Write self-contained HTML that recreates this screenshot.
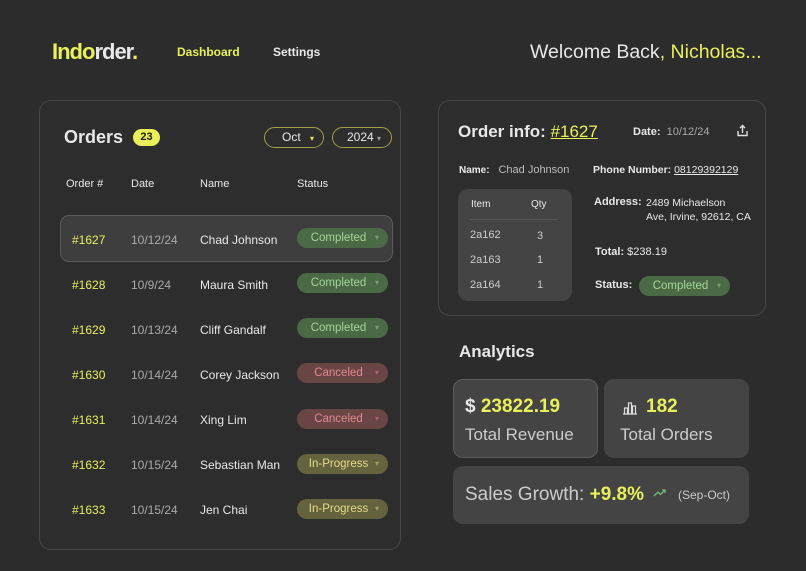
<!DOCTYPE html>
<html><head><meta charset="utf-8"><style>
*{box-sizing:border-box;margin:0;padding:0}
body{width:806px;height:571px;background:#2c2c2c;font-family:"Liberation Sans",sans-serif;color:#e8e8e8;position:relative;overflow:hidden}
.a{position:absolute;white-space:nowrap}
.y{color:#e9f05a}
.card{position:absolute;border:1px solid #464646;border-radius:12px;background:#2d2d2d}
.pill{position:absolute;width:91px;height:20px;border-radius:10px;font-size:11.5px;line-height:20px;text-align:center;padding-right:8px}
.pill:after{content:"▾";position:absolute;right:9px;font-size:8px;opacity:.5}
.g{background:#4a6a45;color:#a6d49a}
.r{background:#6a4546;color:#e08a90}
.p{background:#65623e;color:#e2dd8a}
.row{font-size:12px}
.box{position:absolute;background:#444;border-radius:10px}
</style></head><body>
<div class="a" style="left:52px;top:39px;font-size:22px;font-weight:bold;letter-spacing:-1px"><span class="y">Indo</span>rder<span class="y">.</span></div>
<div class="a y" style="left:177px;top:45px;font-size:12px;font-weight:bold">Dashboard</div>
<div class="a" style="left:273px;top:45px;font-size:12px;font-weight:bold">Settings</div>
<div class="a" style="left:530px;top:41px;font-size:19.5px">Welcome Back<span class="y">, Nicholas...</span></div>

<div class="card" style="left:39px;top:100px;width:362px;height:450px"></div>
<div class="a" style="left:64px;top:127px;font-size:18px;font-weight:bold">Orders</div>
<div class="a" style="left:133px;top:129px;width:27px;height:17px;border-radius:9px;background:#e9f05a;color:#222;font-size:11px;font-weight:bold;text-align:center;line-height:17px">23</div>
<div class="a" style="left:264px;top:127px;width:60px;height:21px;border:1px solid #a0a040;border-radius:11px;font-size:12px;line-height:19px;padding-left:17px">Oct <span class="y" style="font-size:8px;margin-left:6px">▾</span></div>
<div class="a" style="left:332px;top:127px;width:60px;height:21px;border:1px solid #a0a040;border-radius:11px;font-size:12px;line-height:19px;padding-left:14px">2024 <span style="font-size:8px;opacity:.6">▾</span></div>
<div class="a" style="left:66px;top:178px;font-size:11px">Order #</div>
<div class="a" style="left:131px;top:178px;font-size:11px">Date</div>
<div class="a" style="left:200px;top:178px;font-size:11px">Name</div>
<div class="a" style="left:297px;top:178px;font-size:11px">Status</div>
<div class="a" style="left:60px;top:215px;width:333px;height:47px;background:#3e3e3e;border:1px solid #5a5a5a;border-radius:9px"></div>

<div class="a row y" style="left:72px;top:233px">#1627</div><div class="a row" style="left:131px;top:233px;color:#aaa">10/12/24</div><div class="a row" style="left:200px;top:233px">Chad Johnson</div><div class="pill g" style="left:297px;top:228px">Completed</div>
<div class="a row y" style="left:72px;top:278px">#1628</div><div class="a row" style="left:131px;top:278px;color:#aaa">10/9/24</div><div class="a row" style="left:200px;top:278px">Maura Smith</div><div class="pill g" style="left:297px;top:273px">Completed</div>
<div class="a row y" style="left:72px;top:323px">#1629</div><div class="a row" style="left:131px;top:323px;color:#aaa">10/13/24</div><div class="a row" style="left:200px;top:323px">Cliff Gandalf</div><div class="pill g" style="left:297px;top:318px">Completed</div>
<div class="a row y" style="left:72px;top:368px">#1630</div><div class="a row" style="left:131px;top:368px;color:#aaa">10/14/24</div><div class="a row" style="left:200px;top:368px">Corey Jackson</div><div class="pill r" style="left:297px;top:363px">Canceled</div>
<div class="a row y" style="left:72px;top:413px">#1631</div><div class="a row" style="left:131px;top:413px;color:#aaa">10/14/24</div><div class="a row" style="left:200px;top:413px">Xing Lim</div><div class="pill r" style="left:297px;top:409px">Canceled</div>
<div class="a row y" style="left:72px;top:458px">#1632</div><div class="a row" style="left:131px;top:458px;color:#aaa">10/15/24</div><div class="a row" style="left:200px;top:458px">Sebastian Man</div><div class="pill p" style="left:297px;top:454px">In-Progress</div>
<div class="a row y" style="left:72px;top:503px">#1633</div><div class="a row" style="left:131px;top:503px;color:#aaa">10/15/24</div><div class="a row" style="left:200px;top:503px">Jen Chai</div><div class="pill p" style="left:297px;top:499px">In-Progress</div>

<div class="card" style="left:438px;top:100px;width:328px;height:216px"></div>
<div class="a" style="left:458px;top:122px;font-size:17px;font-weight:bold">Order info: <span class="y" style="font-weight:normal;text-decoration:underline">#1627</span></div>
<div class="a" style="left:633px;top:126px;font-size:11px;font-weight:bold">Date: <span style="font-weight:normal;color:#aaa">&nbsp;10/12/24</span></div>
<svg class="a" style="left:736px;top:124px" width="13" height="13" viewBox="0 0 13 13" fill="none" stroke="#ddd" stroke-width="1.4"><path d="M2 7v4.5h9V7M6.5 9V1.5M4 4l2.5-2.5L9 4"/></svg>
<div class="a" style="left:459px;top:164px;font-size:10px;font-weight:bold">Name: <span style="font-weight:normal;font-size:11px;color:#bbb">&nbsp;&nbsp;Chad Johnson</span></div>
<div class="a" style="left:593px;top:164px;font-size:10.5px;font-weight:bold">Phone Number: <span style="font-weight:normal;text-decoration:underline">08129392129</span></div>
<div class="box" style="left:458px;top:189px;width:114px;height:112px"></div>
<div class="a" style="left:471px;top:199px;font-size:10px">Item</div><div class="a" style="left:531px;top:199px;font-size:10px">Qty</div>
<div class="a" style="left:469px;top:219px;width:89px;height:1px;background:#555"></div>
<div class="a" style="left:470px;top:229px;font-size:11px;color:#ccc">2a162</div><div class="a" style="left:537px;top:230px;font-size:11px;color:#ccc">3</div>
<div class="a" style="left:470px;top:254px;font-size:11px;color:#ccc">2a163</div><div class="a" style="left:537px;top:254px;font-size:11px;color:#ccc">1</div>
<div class="a" style="left:470px;top:279px;font-size:11px;color:#ccc">2a164</div><div class="a" style="left:537px;top:279px;font-size:11px;color:#ccc">1</div>
<div class="a" style="left:594px;top:196px;font-size:11px;font-weight:bold">Address:</div>
<div class="a" style="left:646px;top:196px;font-size:10.5px;line-height:14px">2489 Michaelson<br>Ave, Irvine, 92612, CA</div>
<div class="a" style="left:595px;top:246px;font-size:11px"><b>Total:</b> $238.19</div>
<div class="a" style="left:595px;top:279px;font-size:11px;font-weight:bold">Status:</div>
<div class="pill g" style="left:639px;top:276px">Completed</div>

<div class="a" style="left:459px;top:342px;font-size:17px;font-weight:bold">Analytics</div>
<div class="box" style="left:453px;top:379px;width:145px;height:79px;background:#444;border:1px solid #5c5c5c"></div>
<div class="a" style="left:465px;top:396px;font-size:19px;font-weight:bold">$ <span class="y">23822.19</span></div>
<div class="a" style="left:465px;top:425px;font-size:17px;color:#ccc">Total Revenue</div>
<div class="box" style="left:604px;top:379px;width:145px;height:79px"></div>
<svg class="a" style="left:622px;top:401px" width="16" height="14" viewBox="0 0 16 14" fill="none" stroke="#ddd" stroke-width="1.2"><path d="M1 13h14M2.5 13V7h3v6M6.5 13V2h3v11M10.5 13V5h3v8"/></svg>
<div class="a y" style="left:646px;top:396px;font-size:19px;font-weight:bold">182</div>
<div class="a" style="left:620px;top:425px;font-size:17px;color:#ccc">Total Orders</div>
<div class="box" style="left:453px;top:466px;width:296px;height:58px"></div>
<div class="a" style="left:465px;top:484px;font-size:19px;color:#ccc">Sales Growth: <b class="y">+9.8%</b></div>
<svg class="a" style="left:653px;top:488px" width="14" height="10" viewBox="0 0 14 10" fill="none" stroke="#6cc070" stroke-width="1.3"><path d="M1 8l4-4 2.5 2.5L12 2M9 2h3v3"/></svg>
<div class="a" style="left:678px;top:488px;font-size:12px;color:#ccc">(Sep-Oct)</div>
</body></html>
